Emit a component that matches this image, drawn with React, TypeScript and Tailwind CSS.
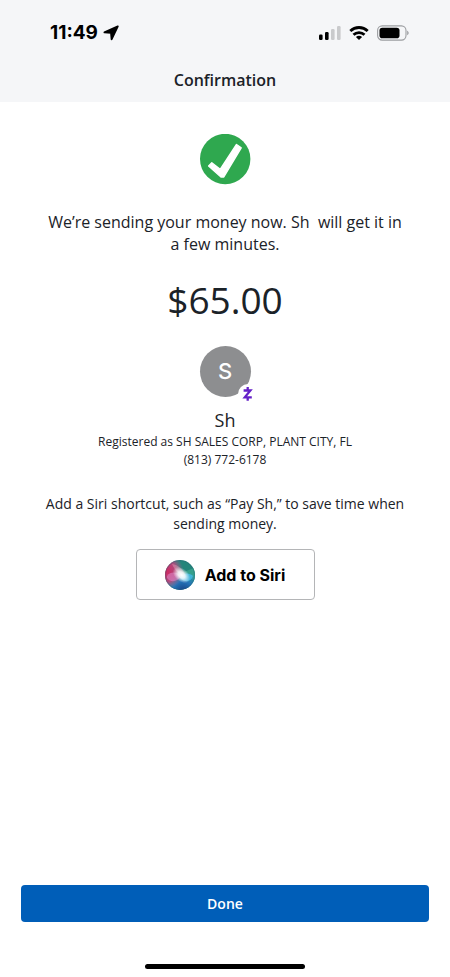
import React from "react";

function StatusBar() {
  return (
    <div className="flex h-[66px] items-center justify-between pl-[50px] pr-[41px] text-black">
      <div className="flex items-center gap-[5px] font-['Inter',sans-serif] text-[19px] font-bold">
        <span>11:49</span>
        <svg className="size-4" viewBox="0 0 16 16" fill="currentColor" stroke="currentColor" strokeWidth="1.800" strokeLinejoin="round" aria-hidden="true">
          <path d="M14.800 1.400 1.400 7.300 8 7.900 8.600 14.400Z" />
        </svg>
      </div>
      <div className="flex items-center gap-2">
        <svg className="h-4 w-[23px]" viewBox="0 0 23 16" aria-hidden="true">
          <rect x="1" y="9.500" width="3.600" height="5.500" rx="1.200" />
          <rect x="7" y="7" width="3.600" height="8" rx="1.200" />
          <rect x="13" y="4" width="3.600" height="11" rx="1.200" fill="#c9cacc" />
          <rect x="19" y="1" width="3.600" height="14" rx="1.200" fill="#c9cacc" />
        </svg>
        <svg className="h-4 w-5" viewBox="0 0 20 16" fill="none" stroke="currentColor" strokeWidth="2.800" aria-hidden="true">
          <path d="M1.300 6a12.600 12.600 0 0 1 17.400 0" />
          <path d="M4.500 9.800a8 8 0 0 1 11 0" />
          <path d="M10 15 6.900 12.100a4.500 4.500 0 0 1 6.200 0Z" fill="currentColor" stroke="none" />
        </svg>
        <svg className="h-4 w-8" viewBox="0 0 32 16" aria-hidden="true">
          <rect x=".6" y=".9" width="28.400" height="14.200" rx="4.600" fill="none" stroke="#9b9da0" strokeWidth="1.100" />
          <rect x="2.500" y="2.800" width="20" height="10.400" rx="2.800" />
          <path d="M30.200 5.800c1.900.7 1.900 3.700 0 4.400Z" fill="#9b9da0" />
        </svg>
      </div>
    </div>
  );
}

function SuccessIcon() {
  return (
    <svg className="size-[51px]" viewBox="0 0 51 51" role="img" aria-label="Success">
      <circle cx="25.200" cy="25" r="25.200" fill="#2fa84f" />
      <path
        d="M8.600 32 11.800 28.800 20.200 35.400 36.500 10.500 41.200 13.800 23.800 43 21 43Z"
        fill="#fff"
        stroke="#fff"
        strokeWidth="1.400"
        strokeLinejoin="round"
      />
    </svg>
  );
}

function Avatar() {
  return (
    <div className="relative flex size-[51px] items-center justify-center rounded-full bg-[#8d8e90] font-['Inter',sans-serif] text-[22px] font-medium text-white">
      S
      <span className="absolute -right-[7px] -bottom-[7px] flex size-5 items-center justify-center rounded-full bg-white">
        <svg className="h-4 w-3" viewBox="0 0 12 16" fill="none" stroke="#6420c8" strokeWidth="2.300" aria-hidden="true">
          <path d="M1.600 4.500h6.800L2.800 11.300h7M5.700 1v3.500M5.700 11.300v3.500" />
        </svg>
      </span>
    </div>
  );
}

function SiriOrb() {
  return (
    <svg className="size-[30px]" viewBox="0 0 30 30" aria-hidden="true">
      <defs>
        <clipPath id="orb"><circle cx="15" cy="15" r="15" /></clipPath>
        <radialGradient id="pink" cx=".02" cy=".38" r=".6">
          <stop offset="0" stopColor="#d3245f" />
          <stop offset=".6" stopColor="#c0447c" stopOpacity=".9" />
          <stop offset="1" stopColor="#a35f93" stopOpacity="0" />
        </radialGradient>
        <radialGradient id="blue" cx=".6" cy="1.050" r=".68">
          <stop offset="0" stopColor="#173f82" />
          <stop offset=".5" stopColor="#2474b8" />
          <stop offset="1" stopColor="#35a6d8" stopOpacity="0" />
        </radialGradient>
        <radialGradient id="glow">
          <stop offset="0" stopColor="#fff" />
          <stop offset=".4" stopColor="#fff" stopOpacity=".85" />
          <stop offset="1" stopColor="#fff" stopOpacity="0" />
        </radialGradient>
      </defs>
      <g clipPath="url(#orb)">
        <rect width="30" height="30" fill="#23857a" />
        <path d="M14 14 31 7v14Z" fill="#36a08b" />
        <rect width="30" height="30" fill="url(#blue)" />
        <rect width="30" height="30" fill="url(#pink)" />
        <path d="M7 4c6 1 12 5 14 13C14 14 10 11 7 4Z" fill="#e3b3c4" opacity=".4" />
        <path d="M2 16c4-5 10-4 14 0-4 6-10 7-14 2Z" fill="#dc86c4" opacity=".6" />
        <path d="M15 17c4-5 10-4 13-1-2 6-8 7-13 2Z" fill="#45bce8" opacity=".8" />
        <ellipse cx="16.500" cy="15" rx="10" ry="6.500" fill="url(#glow)" transform="rotate(40 16.500 15)" />
        <circle cx="15" cy="15" r="14.500" fill="none" stroke="#305c78" opacity=".35" />
      </g>
    </svg>
  );
}

export default function App() {
  return (
    <div className="flex min-h-screen flex-col bg-white font-['Open_Sans',sans-serif] text-[#1b2228]">
      <header className="bg-[#f5f6f8] pb-2">
        <StatusBar />
        <h1 className="text-center text-base leading-7 font-semibold">Confirmation</h1>
      </header>

      <main className="flex grow flex-col items-center px-11 pt-8 text-center">
        <SuccessIcon />
        <p className="mt-[26px] text-base leading-[22px] whitespace-pre-wrap">
          {"We’re sending your money now. Sh  will get it in a few minutes."}
        </p>
        <p className="mt-[22px] text-[37px] leading-[46px]">$65.00</p>
        <div className="mt-[23px]">
          <Avatar />
        </div>
        <h2 className="mt-[11px] text-lg leading-6">Sh</h2>
        <p className="mt-px text-xs leading-[18px]">Registered as SH SALES CORP, PLANT CITY, FL</p>
        <p className="text-xs leading-[18px]">(813) 772-6178</p>
        <p className="mt-[25px] text-sm leading-5">
          Add a Siri shortcut, such as “Pay Sh,” to save time when sending money.
        </p>
        <button
          type="button"
          className="mt-[15px] flex h-[51px] w-[179px] items-center justify-center gap-[10px] rounded border border-[#b4b5b7] bg-white font-['Inter',sans-serif] text-base font-bold text-black"
        >
          <SiriOrb />
          Add to Siri
        </button>
      </main>

      <footer className="flex flex-col items-center px-[21px] pb-2">
        <button type="button" className="h-[37px] w-full rounded bg-[#005eb8] text-sm font-semibold text-white">
          Done
        </button>
        <div className="mt-[42px] h-[5px] w-40 rounded-full bg-black" />
      </footer>
    </div>
  );
}
